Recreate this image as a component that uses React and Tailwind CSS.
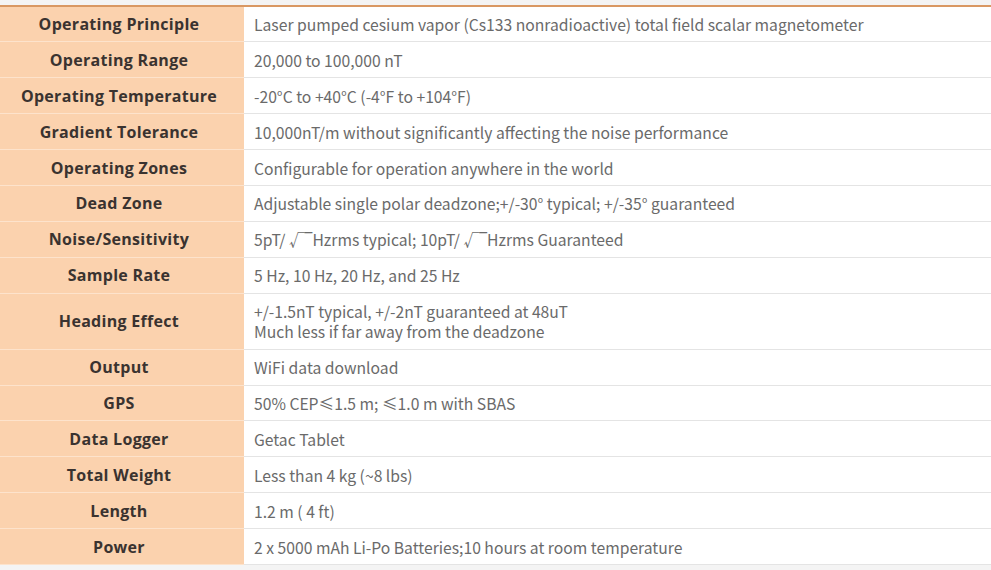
import React from 'react';

const specs = [
  ['Operating Principle', ['Laser pumped cesium vapor (Cs133 nonradioactive) total field scalar magnetometer']],
  ['Operating Range', ['20,000 to 100,000 nT']],
  ['Operating Temperature', ['-20°C to +40°C (-4°F to +104°F)']],
  ['Gradient Tolerance', ['10,000nT/m without significantly affecting the noise performance']],
  ['Operating Zones', ['Configurable for operation anywhere in the world']],
  ['Dead Zone', ['Adjustable single polar deadzone;+/-30° typical; +/-35° guaranteed']],
  ['Noise/Sensitivity', ['5pT/ √‾Hzrms typical; 10pT/ √‾Hzrms Guaranteed']],
  ['Sample Rate', ['5 Hz, 10 Hz, 20 Hz, and 25 Hz']],
  ['Heading Effect', ['+/-1.5nT typical, +/-2nT guaranteed at 48uT', 'Much less if far away from the deadzone']],
  ['Output', ['WiFi data download']],
  ['GPS', ['50% CEP≤1.5 m; ≤1.0 m with SBAS']],
  ['Data Logger', ['Getac Tablet']],
  ['Total Weight', ['Less than 4 kg (~8 lbs)']],
  ['Length', ['1.2 m ( 4 ft)']],
  ['Power', ['2 x 5000 mAh Li-Po Batteries;10 hours at room temperature']],
];

const App = () => {
  return (
    <div className="w-[991px] h-[570px] bg-[#f4f4f4] pt-[5px] overflow-hidden">
      <table className="w-full border-collapse border-t-2 border-[#d99863] bg-white">
        <tbody>
          {specs.map(([label, lines]) => (
            <tr key={label} className="border-b border-[#e4e4e4]">
              <th
                className="w-[244px] bg-[#fbd2ae] border-b border-[#fde3cc] text-center text-[16px] font-bold tracking-[0.3px] text-[#3a3330] pl-0 pr-[6px] py-0"
                style={{ fontFamily: '"Open Sans", sans-serif' }}
              >
                {label}
              </th>
              <td
                className={`${lines.length > 1 ? 'h-[56px]' : 'h-[35.9px]'} pl-[10px] pr-2 pt-[2px] text-[15.7px] leading-[20px] text-[#6a6a6a]`}
                style={{ fontFamily: '"Noto Sans CJK SC", "Noto Sans", sans-serif' }}
              >
                {lines.map((l) => (
                  <div key={l}>{l}</div>
                ))}
              </td>
            </tr>
          ))}
        </tbody>
      </table>
    </div>
  );
};

export default App;
